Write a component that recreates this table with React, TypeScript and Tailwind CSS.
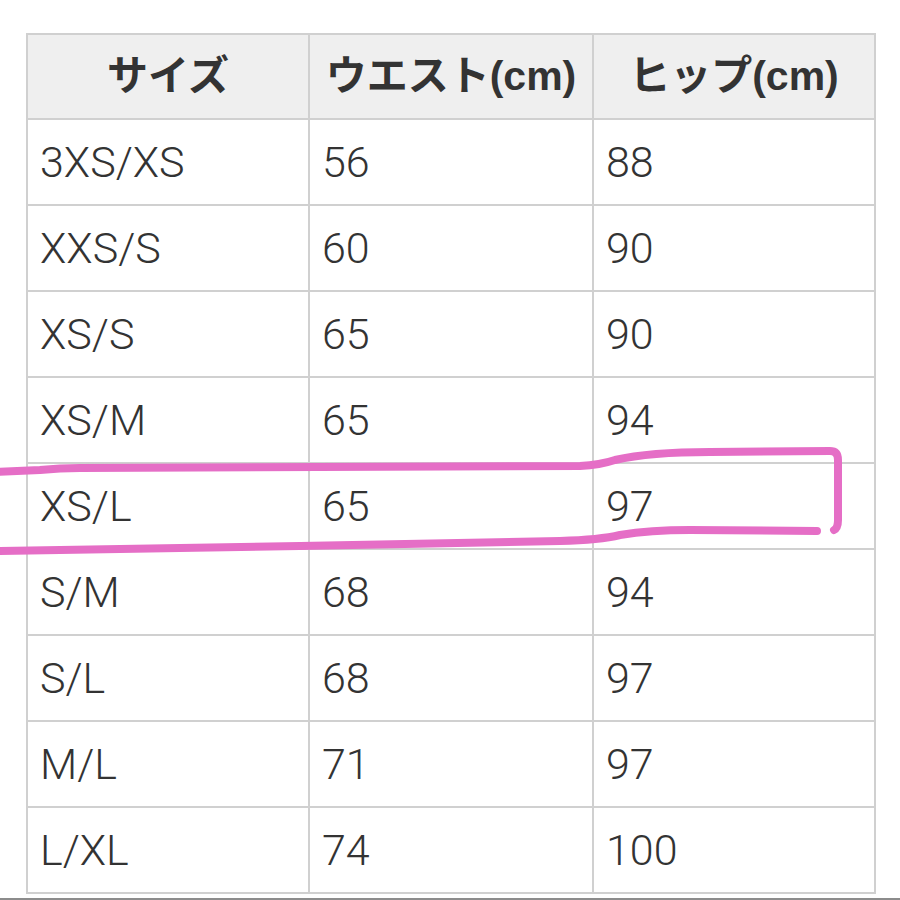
import React from 'react';

const rows: [string, string, string][] = [
  ['3XS/XS', '56', '88'],
  ['XXS/S', '60', '90'],
  ['XS/S', '65', '90'],
  ['XS/M', '65', '94'],
  ['XS/L', '65', '97'],
  ['S/M', '68', '94'],
  ['S/L', '68', '97'],
  ['M/L', '71', '97'],
  ['L/XL', '74', '100'],
];

const headers = ['サイズ', 'ウエスト(cm)', 'ヒップ(cm)'];

export default function App() {
  return (
    <div className="relative w-[900px] h-[900px] bg-white overflow-hidden">
      <div className="pt-[33px] pl-[26px]">
        <table className="w-[848px] table-fixed border-collapse text-[#333]">
          <colgroup>
            <col className="w-[282px]" />
            <col className="w-[284px]" />
            <col className="w-[282px]" />
          </colgroup>
          <thead>
            <tr>
              {headers.map((h) => (
                <th
                  key={h}
                  className="h-[85px] border-2 border-[#d0d0d0] bg-[#efefef] text-center font-bold text-[41px] leading-none"
                  style={{ fontFamily: '"Liberation Sans", "Noto Sans CJK JP", sans-serif' }}
                >
                  {h}
                </th>
              ))}
            </tr>
          </thead>
          <tbody>
            {rows.map((r) => (
              <tr key={r[0]}>
                {r.map((c, i) => (
                  <td
                    key={i}
                    className="h-[86px] border-2 border-[#d0d0d0] pl-[12px] text-left text-[43px] font-light leading-none"
                    style={{ fontFamily: 'Roboto, "Liberation Sans", sans-serif' }}
                  >
                    {c}
                  </td>
                ))}
              </tr>
            ))}
          </tbody>
        </table>
      </div>
      <div className="absolute left-0 bottom-0 w-full h-[2px] bg-[#8c8c8c]" />

      {/* hand-drawn highlight */}
      <svg className="absolute left-0 top-0 pointer-events-none" width="900" height="900" viewBox="0 0 900 900">
        <g fill="none" stroke="#e56ec6" strokeWidth="8" strokeLinecap="round" strokeLinejoin="round">
          <path d="M-5 472 L40 470 Q60 468 80 468 L580 466 Q600 465 615 460 Q650 452 710 452 L830 451 Q838 451 838 460 L838 520 Q838 528 834 530" />
          <path d="M817 531 L690 530 Q650 530 620 535 Q600 540 560 541 L300 546 L180 548 L-5 551" />
        </g>
      </svg>
    </div>
  );
}
